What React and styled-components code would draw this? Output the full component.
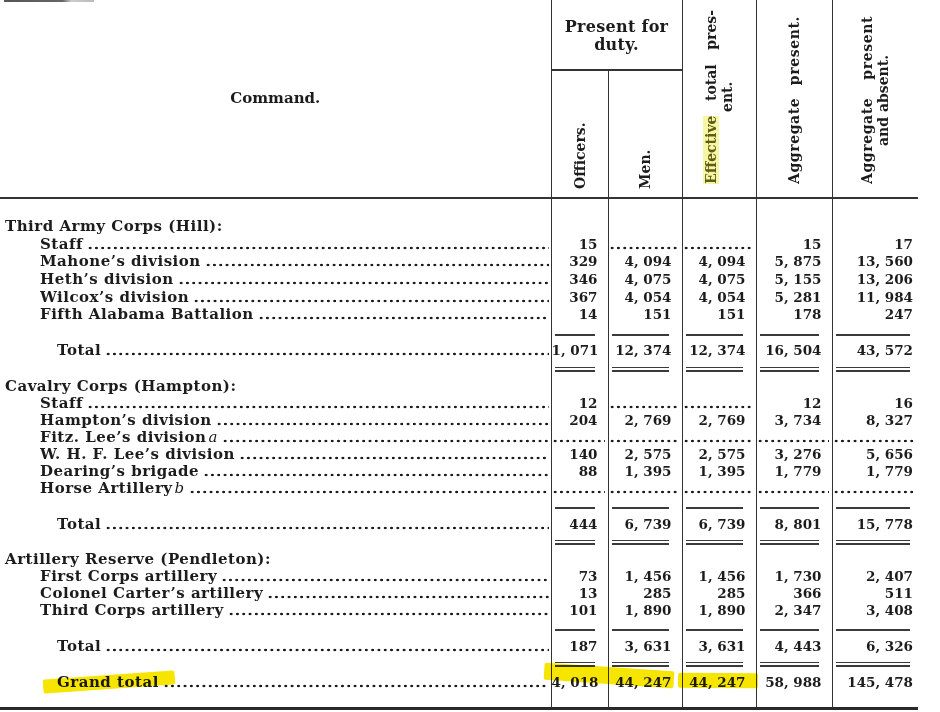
import React from 'react';
import styled, { createGlobalStyle } from 'styled-components';

const INK = '#1c1c1c';
const RULE = '#333';

const GlobalStyle = createGlobalStyle`
  html, body {
    margin: 0;
    background: #fff;
  }
  body {
    font-family: "DejaVu Serif", "Liberation Serif", serif;
    color: ${INK};
  }
`;

const Sheet = styled.div`
  position: relative;
  width: 918px;
`;

// torn bit of the rule from the page above
const Scrap = styled.div`
  position: absolute;
  top: 0;
  left: 4px;
  width: 90px;
  height: 2px;
  background: linear-gradient(90deg, #555 0%, #666 65%, #ccc 75%, #bbb 100%);
`;

const Table = styled.table`
  width: 918px;
  border-collapse: collapse;
  table-layout: fixed;
  font-size: 15px;
  line-height: 17px;
  font-weight: bold;
`;

const Col = styled.col`
  width: ${p => p.$w}px;
`;

const HeadRow = styled.tr`
  height: ${p => p.$h}px;
`;

const HeadCell = styled.th`
  padding: 0;
  font-weight: bold;
  border-left: ${p => (p.$ruled ? `1px solid ${RULE}` : 'none')};
  border-bottom: ${p => (p.$under ? `${p.$under}px solid ${RULE}` : 'none')};
  vertical-align: ${p => p.$valign || 'bottom'};
  padding-bottom: ${p => p.$pad || 0}px;
  padding-top: ${p => p.$top || 0}px;
  text-align: center;
`;

const CommandTitle = styled.span`
  font-size: 15px;
`;

const DutyTitle = styled.div`
  font-size: 16px;
  line-height: 18px;
  letter-spacing: 0.3px;
`;

const Turned = styled.div`
  writing-mode: vertical-rl;
  transform: rotate(180deg);
  height: ${p => p.$len}px;
  margin: 0 auto;
  font-size: 14px;
  line-height: 16px;
  font-weight: bold;
`;

const TurnedLine = styled.span`
  display: block;
  text-align: ${p => p.$align || 'center'};
  text-align-last: ${p => p.$align || 'center'};
  letter-spacing: ${p => p.$track || 0}px;
  white-space: nowrap;
`;

const Hl = styled.span`
  background: #f7f6a2;
  color: #5f5b18;
`;

const Row = styled.tr`
  height: ${p => p.$h}px;
`;

const Label = styled.td`
  position: relative;
  padding: 0 2px 0 ${p => p.$indent}px;
  white-space: nowrap;
  letter-spacing: 0.5px;
  border-bottom: ${p => (p.$last ? `3px solid #2a2a2a` : 'none')};
`;

const LabelLine = styled.div`
  display: flex;
  align-items: stretch;
  overflow: hidden;
`;

const Note = styled.i`
  font-weight: normal;
  margin-left: 2px;
`;

const Leader = styled.span`
  flex: 1;
  min-width: 0;
  margin-left: 4px;
  background-image: radial-gradient(circle, ${INK} 1.1px, transparent 1.6px);
  background-size: 6.3px 4px;
  background-repeat: repeat-x;
  background-position: left bottom 3px;
`;

const CellDots = styled.div`
  display: flex;
  height: 17px;
  margin-left: -4px;
`;

const Num = styled.td`
  position: relative;
  padding: 0 ${p => (p.$dots ? 3 : p.$last ? 5 : 10)}px 0 0;
  border-left: 1px solid ${RULE};
  border-bottom: ${p => (p.$end ? `3px solid #2a2a2a` : 'none')};
  text-align: right;
  white-space: nowrap;
  font-size: 13.5px;
  vertical-align: ${p => p.$valign || 'middle'};
  padding-bottom: ${p => p.$pad || 0}px;
`;

const Rule = styled.div`
  margin: 0 3px;
  height: ${p => (p.$double ? 2 : 0)}px;
  border-top: ${p => (p.$double ? 1 : 2)}px solid #3a3a3a;
  border-bottom: ${p => (p.$double ? '2px solid #3a3a3a' : 'none')};
`;

// highlighter stroke laid over the printed page
const Marker = styled.span`
  position: absolute;
  left: ${p => p.$left}px;
  top: ${p => p.$top}px;
  width: ${p => p.$w}px;
  height: ${p => p.$h}px;
  background: #f6e500;
  border-radius: 2px;
  transform: rotate(${p => p.$tilt}deg);
  mix-blend-mode: multiply;
  pointer-events: none;
`;

const DOTS = null;

const groups = [
  {
    title: 'Third Army Corps (Hill):',
    rowH: 17.6,
    items: [
      ['Staff', [15, DOTS, DOTS, 15, 17]],
      ["Mahone\u2019s division", [329, '4, 094', '4, 094', '5, 875', '13, 560']],
      ["Heth\u2019s division", [346, '4, 075', '4, 075', '5, 155', '13, 206']],
      ["Wilcox\u2019s division", [367, '4, 054', '4, 054', '5, 281', '11, 984']],
      ['Fifth Alabama Battalion', [14, 151, 151, 178, 247]],
    ],
    total: ['1, 071', '12, 374', '12, 374', '16, 504', '43, 572'],
  },
  {
    title: 'Cavalry Corps (Hampton):',
    rowH: 17.1,
    items: [
      ['Staff', [12, DOTS, DOTS, 12, 16]],
      ["Hampton\u2019s division", [204, '2, 769', '2, 769', '3, 734', '8, 327']],
      ["Fitz. Lee\u2019s division", [DOTS, DOTS, DOTS, DOTS, DOTS], 'a'],
      ["W. H. F. Lee\u2019s division", [140, '2, 575', '2, 575', '3, 276', '5, 656']],
      ["Dearing\u2019s brigade", [88, '1, 395', '1, 395', '1, 779', '1, 779']],
      ['Horse Artillery', [DOTS, DOTS, DOTS, DOTS, DOTS], 'b'],
    ],
    total: [444, '6, 739', '6, 739', '8, 801', '15, 778'],
  },
  {
    title: 'Artillery Reserve (Pendleton):',
    rowH: 17,
    items: [
      ['First Corps artillery', [73, '1, 456', '1, 456', '1, 730', '2, 407']],
      ["Colonel Carter\u2019s artillery", [13, 285, 285, 366, 511]],
      ['Third Corps artillery', [101, '1, 890', '1, 890', '2, 347', '3, 408']],
    ],
    total: [187, '3, 631', '3, 631', '4, 443', '6, 326'],
  },
];

const grandTotal = ['4, 018', '44, 247', '44, 247', '58, 988', '145, 478'];

const EmptyNums = ({ end }) =>
  [0, 1, 2, 3, 4].map(i => <Num key={i} $last={i === 4} $end={end} />);

const NumCells = ({ values }) =>
  values.map((v, i) =>
    v === DOTS ? (
      <Num key={i} $dots>
        <CellDots>
          <Leader />
        </CellDots>
      </Num>
    ) : (
      <Num key={i} $last={i === 4}>
        {v}
      </Num>
    ),
  );

const RuleRow = ({ double }) => (
  <Row $h={18}>
    <Label $indent={0} />
    {[0, 1, 2, 3, 4].map(i => (
      <Num key={i} $last={i === 4} $valign="bottom" $pad={6}>
        <Rule $double={double} />
      </Num>
    ))}
  </Row>
);

const Group = ({ group }) => (
  <>
    <Row $h={group.rowH}>
      <Label $indent={5}>{group.title}</Label>
      <EmptyNums />
    </Row>
    {group.items.map(([name, values, note]) => (
      <Row key={name} $h={group.rowH}>
        <Label $indent={40}>
          <LabelLine>
            <span>
              {name}
              {note && <Note>{note}</Note>}
            </span>
            <Leader />
          </LabelLine>
        </Label>
        <NumCells values={values} />
      </Row>
    ))}
    <RuleRow />
    <Row $h={18}>
      <Label $indent={57}>
        <LabelLine>
          <span>Total</span>
          <Leader />
        </LabelLine>
      </Label>
      <NumCells values={group.total} />
    </Row>
    <RuleRow double />
  </>
);

const App = () => (
  <>
    <GlobalStyle />
    <Sheet>
      <Scrap />
      <Table>
        <colgroup>
          <Col $w={551} />
          <Col $w={57} />
          <Col $w={74} />
          <Col $w={74} />
          <Col $w={76} />
          <Col $w={86} />
        </colgroup>
        <thead>
          <HeadRow $h={70}>
            <HeadCell rowSpan={2} $under={2} $valign="middle">
              <CommandTitle>Command.</CommandTitle>
            </HeadCell>
            <HeadCell colSpan={2} $ruled $under={2} $valign="top" $top={18}>
              <DutyTitle>
                Present for
                <br />
                duty.
              </DutyTitle>
            </HeadCell>
            <HeadCell rowSpan={2} $ruled $under={2} $pad={13}>
              <Turned $len={174}>
                <TurnedLine $align="justify">
                  <Hl>Effective</Hl> total pres-
                </TurnedLine>
                <TurnedLine>ent.</TurnedLine>
              </Turned>
            </HeadCell>
            <HeadCell rowSpan={2} $ruled $under={2} $pad={13}>
              <Turned $len={168}>
                <TurnedLine $align="justify" $track={0.6}>
                  Aggregate present.
                </TurnedLine>
              </Turned>
            </HeadCell>
            <HeadCell rowSpan={2} $ruled $under={2} $pad={13}>
              <Turned $len={168}>
                <TurnedLine $align="justify" $track={0.6}>
                  Aggregate present
                </TurnedLine>
                <TurnedLine>and absent.</TurnedLine>
              </Turned>
            </HeadCell>
          </HeadRow>
          <HeadRow $h={128}>
            <HeadCell $ruled $under={2} $pad={8}>
              <Turned $len={110}>
                <TurnedLine $align="start">Officers.</TurnedLine>
              </Turned>
            </HeadCell>
            <HeadCell $ruled $under={2} $pad={8}>
              <Turned $len={110}>
                <TurnedLine $align="start">Men.</TurnedLine>
              </Turned>
            </HeadCell>
          </HeadRow>
        </thead>
        <tbody>
          <Row $h={20}>
            <Label $indent={0} />
            <EmptyNums />
          </Row>
          {groups.map(g => (
            <Group key={g.title} group={g} />
          ))}
          <Row $h={18}>
            <Label $indent={57}>
              <Marker $left={43} $top={1.5} $w={132} $h={14} $tilt={-4} />
              <LabelLine>
                <span>Grand total</span>
                <Leader />
              </LabelLine>
            </Label>
            {grandTotal.map((v, i) => (
              <Num key={i} $last={i === 4}>
                {i === 0 && <Marker $left={-8} $top={-6} $w={130} $h={17} $tilt={3.8} />}
                {i === 2 && <Marker $left={-5} $top={0} $w={80} $h={15} $tilt={0.5} />}
                {v}
              </Num>
            ))}
          </Row>
          <Row $h={17}>
            <Label $indent={0} $last />
            <EmptyNums end />
          </Row>
        </tbody>
      </Table>
    </Sheet>
  </>
);

export default App;
